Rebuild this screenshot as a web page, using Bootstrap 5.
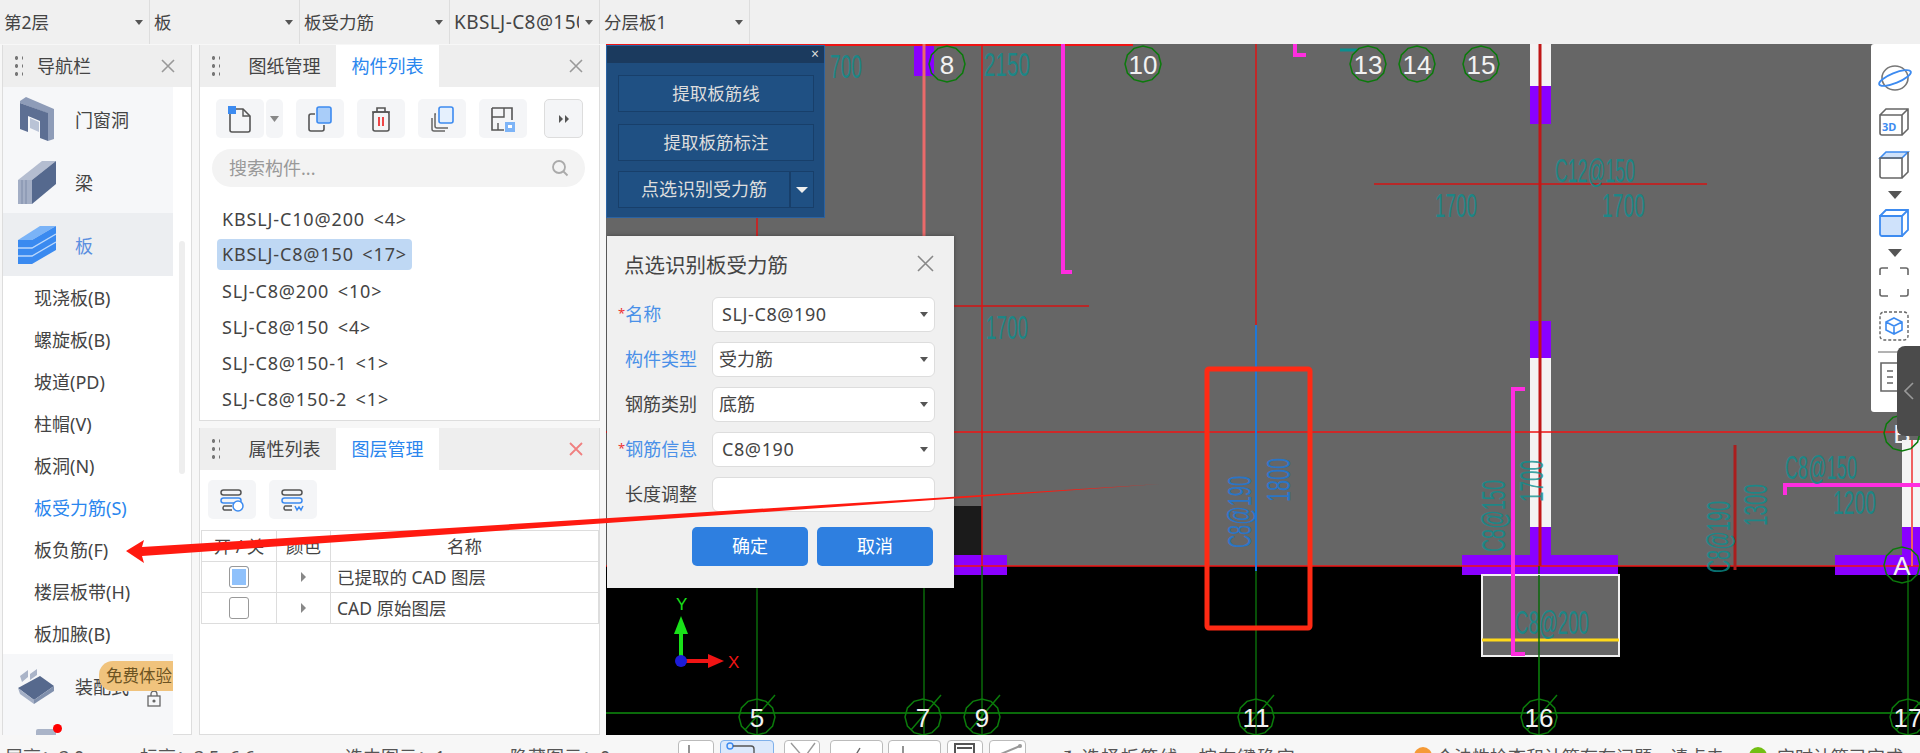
<!DOCTYPE html>
<html lang="zh-CN">
<head>
    <meta charset="UTF-8" />
    <meta name="viewport" content="width=device-width, initial-scale=1.0" />
    <title>板受力筋识别</title>
    <link href="https://cdn.jsdelivr.net/npm/bootstrap@5.3.0/dist/css/bootstrap.min.css" rel="stylesheet">
    <style>
        html, body { height: 753px; overflow: hidden; }
        body { width: 1920px; background: #f7f7f7; color: #444; font-family: "Noto Sans", "Noto Sans CJK SC", sans-serif; font-size: 16px; position: relative; }

        .floor-bar { height: 44px; background: #f0f0f0; }
        .floor-sel { width: 150px; height: 44px; border: 0; border-right: 1px solid #ddd; border-radius: 0; background-color: #f0f0f0; padding: 0 20px 0 4px; font-size: 17.5px; color: #444; box-shadow: none; }
        .floor-sel.code-sel { font-size: 19px; letter-spacing: .4px; }
        .floor-sel, .dlg-sel { background-image: url("data:image/svg+xml,%3csvg xmlns='http://www.w3.org/2000/svg' viewBox='0 0 8 5'%3e%3cpath fill='%23555' d='M0 0h8L4 5z'/%3e%3c/svg%3e"); background-size: 8px 5px; background-position: right 6px center; }

        .work-area { height: 691px; }
        .nav-pane { width: 190px; margin: 1px 0 0 2px; background: #fff; border: 1px solid #ddd; border-top: 0; }
        .mid-col { width: 401px; margin: 1px 6px 0 7px; gap: 7px; }
        .side-pane { background: #fff; border: 1px solid #ddd; border-top: 0; }
        .pane-comp { height: 376px; flex: none; }
        .pane-head { height: 42px; background: #eeeeee; flex: none; }
        .grip { width: 10px; height: 24px; margin-left: 10px; background-image: radial-gradient(circle, #777 1.6px, transparent 2px); background-size: 7px 8px; flex: none; }
        .pane-title { font-size: 18px; margin-left: 14px; }
        .pane-tab { height: 42px; width: 103px; line-height: 42px; text-align: center; font-size: 18px; }
        .pane-tab.first-tab { margin-left: 13px; }
        .pane-tab.on { background: #fff; color: #2a86ee; }
        .pane-close { margin-left: auto; margin-right: 15px; width: 16px; height: 16px; display: block; }

        .nav-list { height: 648px; overflow: hidden; }
        .nav-big { width: 170px; height: 63px; background: #f6f7f9; font-size: 18px; padding-left: 15px; gap: 19px; }
        .nav-big span { padding-top: 3px; }
        .nav-big svg { flex: none; width: 38px; }
        .nav-big.on { background: #eceef1; color: #5b8fe0; }
        .nav-sub { height: 42px; line-height: 44px; padding-left: 31px; font-size: 18px; }
        .nav-sub.on { color: #2a86ee; }
        .nav-thumb { position: absolute; left: 176px; top: 154px; width: 6px; height: 233px; background: #eee; border-radius: 3px; }
        .try-tag { position: absolute; left: 96px; top: 7px; width: 74px; height: 30px; background: #f0c37d; color: #6c5322; border-radius: 14px 0 0 14px; font-size: 16.5px; line-height: 30px; padding-left: 7px; white-space: nowrap; overflow: hidden; }
        .lock-ico { position: absolute; left: 144px; top: 37px; }
        .red-dot { position: absolute; left: 50px; top: 70px; width: 9px; height: 9px; border-radius: 50%; background: #f00; }
        .next-ico { position: absolute; left: 33px; top: 75px; width: 20px; height: 10px; background: #aab4c8; border-radius: 2px; }

        .tool-row { gap: 13px; }
        .layer-tools { margin: 10px 0 11px 8px; }
        .tool-btn { width: 48px; height: 39px; padding: 0; background: #f4f5f7; border: 0; border-radius: 5px; display: flex; align-items: center; justify-content: center; }
        .tool-btn.arrow-btn { width: 39px; border: 1px solid #ddd; margin-left: 4px; }
        .new-split { width: 67px; gap: 2px; background: none; }
        .new-split span { display: flex; align-items: center; justify-content: center; height: 39px; background: #f4f5f7; border-radius: 5px; }
        .search-box { width: 373px; height: 38px; margin: 11px 0 0 12px; background: #f3f3f3; border-radius: 19px; padding-left: 15px; }
        .search-box input { border: 0; background: none; flex: 1; min-width: 0; outline: 0; font-size: 18px; color: #666; }
        .search-box input::placeholder { color: #999; }
        .comp-list { margin: 14px 0 0 17px; }
        .comp-item { height: 36px; line-height: 37px; padding: 0 5px; font-size: 18px; letter-spacing: .85px; word-spacing: 3px; width: fit-content; white-space: pre; }
        .comp-item.on { background: #bfd8f4; border-radius: 4px; height: 31px; line-height: 31px; margin: 2px 0 3px; }

        .layer-table { width: 398px; margin: 0 0 0 1px; font-size: 17.5px; color: #444; border-color: #ddd; table-layout: fixed; }
        .layer-table td, .layer-table th { height: 31px; padding: 0 6px; vertical-align: middle; font-weight: 400; white-space: nowrap; }
        .tick { display: block; margin: 0 auto; width: 20px; height: 22px; border: 1px solid #999; border-radius: 3px; background: #fff; }
        .tick.on { background: #8fc1fb; box-shadow: inset 0 0 0 2px #fff; }
        .mini-caret { display: block; margin: 0 auto; width: 0; height: 0; border-left: 5px solid #888; border-top: 5px solid transparent; border-bottom: 5px solid transparent; }

        .cad-view { width: 1314px; height: 691px; overflow: hidden; }
        .cad-svg { display: block; font-family: "Liberation Sans", sans-serif; }
        .cad-txt { fill: #0b8f8f; fill-opacity: .8; font-size: 33px; }
        .cad-blue { fill: #1e78d8; fill-opacity: .85; font-size: 33px; }
        .cad-num { fill: #f2f2f2; font-size: 26px; text-anchor: middle; }

        .pick-panel { position: absolute; left: 0; top: 1px; width: 219px; height: 173px; background: #1f4d7e; border: 1px solid #2a62a2; }
        .pick-top { height: 17px; background: #1b3a5e; color: #ddd; font-size: 14px; line-height: 16px; text-align: right; padding-right: 5px; }
        .pick-btn { display: block; height: 37px; margin: 12px 10px 0 11px; background: #1f5083; border: 1px solid #183f6a; color: #ddd; font-size: 17.5px; text-align: center; line-height: 35px; }
        .pick-split { display: flex; margin: 10px 10px 0 11px; height: 37px; }
        .pick-split div { border: 1px solid #183f6a; background: #1f5083; color: #ddd; font-size: 18px; text-align: center; line-height: 35px; }
        .pick-main { flex: 1; }
        .pick-drop { width: 24px; display: flex; align-items: center; justify-content: center; }
        .pick-drop i { border-top: 6px solid #eee; border-left: 6px solid transparent; border-right: 6px solid transparent; }

        .pick-dialog { position: absolute; left: 1px; top: 192px; width: 347px; height: 352px; background: #f0f0f0; box-shadow: 0 0 4px rgba(0,0,0,.35); }
        .dlg-title { font-size: 20.5px; padding: 17px 0 0 17px; height: 61px; color: #444; line-height: 1.2; }
        .dlg-x { position: absolute; right: 20px; top: 19px; width: 17px; height: 17px; }
        .dlg-row { height: 35px; margin-bottom: 10px; }
        .dlg-lab { width: 105px; padding-left: 11px; font-size: 18px; white-space: nowrap; }
        .dlg-lab.blue { color: #4a90e8; }
        .dlg-lab b { color: #e33; font-weight: 400; font-size: 13px; vertical-align: 3px; }
        .dlg-lab .pad { display: inline-block; width: 7px; }
        .dlg-sel, .dlg-in { width: 223px; height: 35px; font-size: 18px; padding: 0 20px 0 6px; color: #444; border: 1px solid #ddd; border-radius: 6px; box-shadow: none; }
        .dlg-sel.ltr { padding-left: 9px; letter-spacing: .6px; }
        .dlg-foot { gap: 9px; margin: 15px 0 0 85px; }
        .dlg-btn { width: 116px; height: 39px; background: #2e7fe0; border: 0; color: #fff; border-radius: 5px; font-size: 18px; padding: 0; }

        .view-tools { position: absolute; right: 0; top: 0; width: 49px; height: 368px; background: #fff; border-radius: 3px 0 0 3px; padding-left: 7px; }
        .view-tools svg { display: block; position: absolute; left: 7px; }
        .view-handle { position: absolute; right: 0; top: 302px; width: 23px; height: 90px; background: #4b4b4b; border-radius: 8px 0 0 8px; }

        .status-bar { height: 18px; overflow: hidden; font-size: 18px; line-height: 24px; padding-top: 11px; position: relative; white-space: nowrap; color: #555; }
        .st-txt { position: absolute; top: 10px; }
        .st-btn { position: absolute; top: 5px; height: 22px; border: 1px solid #bbb; border-radius: 4px; background: #fff; }
        .st-btn.on { background: #dce9fb; border-color: #7fb0ea; }
        .st-btn svg { display: block; margin: 1px auto 0; }
        .st-dot { position: absolute; top: 12px; width: 18px; height: 18px; border-radius: 50%; }
        .pointer-arrow { position: absolute; left: 0; top: 0; pointer-events: none; }
    </style>
</head>
<body>
    <div class="floor-bar d-flex">
        <select class="form-select floor-sel"><option>第2层</option></select>
        <select class="form-select floor-sel"><option>板</option></select>
        <select class="form-select floor-sel"><option>板受力筋</option></select>
        <select class="form-select floor-sel code-sel"><option>KBSLJ-C8@150</option></select>
        <select class="form-select floor-sel"><option>分层板1</option></select>
    </div>

    <div class="work-area d-flex">
        <div class="nav-pane position-relative flex-none">
            <div class="pane-head d-flex align-items-center">
                <span class="grip"></span>
                <span class="pane-title">导航栏</span>
                <svg class="pane-close" viewBox="0 0 16 16"><path d="M2 2l12 12M14 2L2 14" stroke="#999" stroke-width="1.6" fill="none"/></svg>
            </div>
            <div class="nav-list position-relative">
                <div class="nav-big d-flex align-items-center">
                    <svg height="44" viewBox="0 0 38 44"><path d="M2 4l6-4 28 12v30l-6 2-1-28L2 6z" fill="#8e9cb8"/><path d="M2 6l28 10v28L22 41V24l-12-5v16l-8-3z" fill="#5d6f93"/><path d="M12 21l9 4v10l-9-4z" fill="#b9c3d6"/></svg>
                    <span>门窗洞</span>
                </div>
                <div class="nav-big d-flex align-items-center">
                    <svg height="44" viewBox="0 0 38 44"><path d="M0 20L24 1h14L14 20z" fill="#b4bdd0"/><path d="M14 20L38 1v23L14 44z" fill="#55698e"/><path d="M0 20h14v24H0z" fill="#a3aec5"/><path d="M4 20v24M8 20v24" stroke="#7f8ca9" stroke-width="1"/></svg>
                    <span>梁</span>
                </div>
                <div class="nav-big on d-flex align-items-center">
                    <svg height="38" viewBox="0 0 38 38"><path d="M0 14L22 0h16L14 14z" fill="#7ab3f7"/><path d="M0 14h14L38 0v24L14 38H0z" fill="#3a8af0"/><path d="M0 22h14L38 8M0 30h14L38 16" stroke="#bcd8fb" stroke-width="1.4" fill="none"/></svg>
                    <span>板</span>
                </div>
                <div class="nav-sub">现浇板(B)</div>
                <div class="nav-sub">螺旋板(B)</div>
                <div class="nav-sub">坡道(PD)</div>
                <div class="nav-sub">柱帽(V)</div>
                <div class="nav-sub">板洞(N)</div>
                <div class="nav-sub on">板受力筋(S)</div>
                <div class="nav-sub">板负筋(F)</div>
                <div class="nav-sub">楼层板带(H)</div>
                <div class="nav-sub">板加腋(B)</div>
                <div class="position-relative">
                    <div class="nav-big d-flex align-items-center">
                        <svg height="36" viewBox="0 0 38 36"><path d="M2 8l8-6v7l-6 5zM12 6l7-5v6l-7 5z" fill="#aab4c8"/><path d="M0 20L22 8l14 10-20 14z" fill="#56698d"/><path d="M0 20l16 12v4L2 26z" fill="#a5b0c6"/><path d="M16 32l20-14v5L16 36z" fill="#8090ad"/></svg>
                        <span>装配式</span>
                    </div>
                    <svg class="lock-ico" width="14" height="16" viewBox="0 0 14 16"><path d="M4 5V3a3 3 0 0 1 6 0v2" fill="none" stroke="#666" stroke-width="1.3"/><rect x="1" y="5" width="12" height="10" fill="none" stroke="#666" stroke-width="1.3"/><circle cx="7" cy="10" r="1.600" fill="#666"/></svg>
                    <div class="try-tag">免费体验</div>
                    <div class="nav-big"></div>
                    <div class="next-ico"></div>
                    <div class="red-dot"></div>
                </div>
                <div class="nav-thumb"></div>
            </div>
        </div>

        <div class="mid-col d-flex flex-column flex-none">
            <div class="side-pane pane-comp">
                <div class="pane-head d-flex align-items-center">
                    <span class="grip"></span>
                    <span class="pane-tab first-tab">图纸管理</span>
                    <span class="pane-tab on">构件列表</span>
                    <svg class="pane-close" viewBox="0 0 16 16"><path d="M2 2l12 12M14 2L2 14" stroke="#999" stroke-width="1.6" fill="none"/></svg>
                </div>
                <div class="tool-row d-flex ms-3 mt-2 ps-0 pt-1">
                    <div class="tool-btn new-split">
                        <span style="width:48px"><svg width="26" height="28" viewBox="0 0 26 28"><path d="M3 4h13l7 7v14a2 2 0 0 1-2 2H5a2 2 0 0 1-2-2z" fill="none" stroke="#555" stroke-width="1.6"/><path d="M16 4v7h7" fill="none" stroke="#555" stroke-width="1.4"/><rect x="1" y="1" width="8" height="8" fill="#3d8bf0"/></svg></span>
                        <span style="width:17px"><svg width="9" height="6" viewBox="0 0 9 6"><path d="M0 0h9L4.500 6z" fill="#888"/></svg></span>
                    </div>
                    <button class="tool-btn"><svg width="26" height="28" viewBox="0 0 26 28"><rect x="10" y="2" width="14" height="16" rx="2" fill="#a9cdf9" stroke="#3d8bf0" stroke-width="1.6"/><path d="M8 9H4a2 2 0 0 0-2 2v13a2 2 0 0 0 2 2h11a2 2 0 0 0 2-2v-4" fill="none" stroke="#555" stroke-width="1.6"/></svg></button>
                    <button class="tool-btn"><svg width="24" height="28" viewBox="0 0 24 28"><path d="M3 7h18M8 7V3h8v4" fill="none" stroke="#555" stroke-width="1.6"/><rect x="4" y="7" width="16" height="19" rx="2" fill="none" stroke="#555" stroke-width="1.6"/><path d="M10 12v9M14 12v9" stroke="#e33" stroke-width="1.8"/></svg></button>
                    <button class="tool-btn"><svg width="26" height="28" viewBox="0 0 26 28"><rect x="10" y="2" width="14" height="16" rx="2" fill="#e5f0fd" stroke="#3d8bf0" stroke-width="1.6"/><path d="M7 9H6v12a2 2 0 0 0 2 2h11M3 13v11a2 2 0 0 0 2 2h11" fill="none" stroke="#666" stroke-width="1.5"/></svg></button>
                    <button class="tool-btn"><svg width="26" height="28" viewBox="0 0 26 28"><path d="M2 3h20v12M2 3v22h12" fill="none" stroke="#555" stroke-width="1.6"/><path d="M2 12h12V3M8 25v-7" fill="none" stroke="#555" stroke-width="1.4"/><rect x="15" y="17" width="10" height="10" fill="#7db4f7"/><path d="M18 20h4v3h-4z" fill="#fff"/></svg></button>
                    <button class="tool-btn arrow-btn"><svg width="12" height="10" viewBox="0 0 12 10"><path d="M1 1l4 4-4 4zM7 1l4 4-4 4z" fill="#555"/></svg></button>
                </div>
                <div class="search-box d-flex align-items-center">
                    <input type="text" placeholder="搜索构件..." />
                    <svg class="me-3" width="18" height="18" viewBox="0 0 18 18"><circle cx="8" cy="8" r="6" fill="none" stroke="#aaa" stroke-width="1.8"/><path d="M12.500 12.500l4 4" stroke="#aaa" stroke-width="1.8"/></svg>
                </div>
                <div class="comp-list">
                    <div class="comp-item">KBSLJ-C10@200 &lt;4&gt;</div>
                    <div class="comp-item on">KBSLJ-C8@150 &lt;17&gt;</div>
                    <div class="comp-item">SLJ-C8@200 &lt;10&gt;</div>
                    <div class="comp-item">SLJ-C8@150 &lt;4&gt;</div>
                    <div class="comp-item">SLJ-C8@150-1 &lt;1&gt;</div>
                    <div class="comp-item">SLJ-C8@150-2 &lt;1&gt;</div>
                </div>
            </div>
            <div class="side-pane pane-layer flex-grow-1">
                <div class="pane-head d-flex align-items-center">
                    <span class="grip"></span>
                    <span class="pane-tab first-tab">属性列表</span>
                    <span class="pane-tab on">图层管理</span>
                    <svg class="pane-close" viewBox="0 0 16 16"><path d="M2 2l12 12M14 2L2 14" stroke="#f08080" stroke-width="1.8" fill="none"/></svg>
                </div>
                <div class="tool-row d-flex layer-tools">
                    <button class="tool-btn"><svg width="26" height="24" viewBox="0 0 26 24"><rect x="2" y="2" width="20" height="5" rx="2.500" fill="none" stroke="#555" stroke-width="1.500"/><rect x="2" y="10" width="20" height="5" rx="2.500" fill="none" stroke="#3d8bf0" stroke-width="1.500"/><path d="M13 22H5a2.500 2.500 0 0 1 0-4h8" fill="none" stroke="#555" stroke-width="1.500"/><circle cx="19" cy="18" r="5" fill="#fff" stroke="#3d8bf0" stroke-width="1.500"/></svg></button>
                    <button class="tool-btn"><svg width="26" height="24" viewBox="0 0 26 24"><rect x="2" y="2" width="20" height="5" rx="2.500" fill="none" stroke="#555" stroke-width="1.500"/><rect x="2" y="10" width="20" height="5" rx="2.500" fill="none" stroke="#3d8bf0" stroke-width="1.500"/><path d="M12 22H5a2.500 2.500 0 0 1 0-4h7" fill="none" stroke="#555" stroke-width="1.500"/><path d="M15 18l2 4 2-3 2 3 2-4" fill="none" stroke="#3d8bf0" stroke-width="1.500"/></svg></button>
                </div>
                <table class="table table-bordered layer-table">
                    <colgroup><col style="width:75px"><col style="width:54px"><col></colgroup>
                    <thead><tr><th class="text-center">开 / 关</th><th class="text-center">颜色</th><th class="text-center">名称</th></tr></thead>
                    <tbody>
                        <tr><td><span class="tick on"></span></td><td><span class="mini-caret"></span></td><td>已提取的 CAD 图层</td></tr>
                        <tr><td><span class="tick"></span></td><td><span class="mini-caret"></span></td><td>CAD 原始图层</td></tr>
                    </tbody>
                </table>
            </div>
        </div>

        <div class="cad-view position-relative flex-none">
            <svg class="cad-svg" width="1314" height="691" viewBox="606 44 1314 691">
                <defs>
                    <polygon id="oct" points="18,0 15.600,9 9,15.600 0,18 -9,15.600 -15.600,9 -18,0 -15.600,-9 -9,-15.600 0,-18 9,-15.600 15.600,-9" fill="none" stroke="#0b7a0b" stroke-width="1.500"/>
                </defs>
                <rect x="606" y="44" width="1314" height="522" fill="#666"/>
                <rect x="606" y="566" width="1314" height="169" fill="#000"/>

                <!-- walls -->
                <rect x="1530" y="44" width="21" height="42" fill="#f4f4f4"/>
                <rect x="1530" y="86" width="21" height="38" fill="#8a00ff"/>
                <rect x="1530" y="321" width="21" height="38" fill="#8a00ff"/>
                <rect x="1530" y="358" width="21" height="170" fill="#f4f4f4"/>
                <rect x="1530" y="527" width="21" height="30" fill="#8a00ff"/>
                <rect x="1462" y="555" width="156" height="20" fill="#8a00ff"/>
                <rect x="1835" y="555" width="70" height="20" fill="#8a00ff"/>
                <rect x="1902" y="440" width="18" height="90" fill="#f4f4f4"/>
                <rect x="1902" y="527" width="18" height="40" fill="#8a00ff"/>
                <rect x="1902" y="566" width="18" height="9" fill="#8a00ff"/>
                <rect x="914" y="44" width="20" height="32" fill="#8a00ff"/>
                <rect x="918" y="555" width="89" height="20" fill="#8a00ff"/>
                <rect x="930" y="506" width="52" height="49" fill="#1b1b1b"/>

                <!-- beam lines -->
                <path d="M606 45H1133" stroke="#f01414" stroke-width="2"/>
                <path d="M606 432H1920M606 566H1920" stroke="#f01414" stroke-width="1.500"/>
                <path d="M924 306H1089M1374 184H1707" stroke="#d41414" stroke-width="1.500"/>
                <path d="M757 44V566M982 44V566M1256 44V366" stroke="#e01414" stroke-width="1.500"/>
                <path d="M924 44V566" stroke="#ea6a6a" stroke-width="3"/>
                <path d="M1540 44V566" stroke="#c01818" stroke-width="3"/>
                <path d="M1735 445V570" stroke="#aa1e1e" stroke-width="3"/>
                <path d="M1912 440V566" stroke="#f06060" stroke-width="2"/>

                <!-- axis lines -->
                <path d="M757 566V735M924 566V735M982 566V735M1256 566V735M1539 566V735M1908 566V735" stroke="#0a6a0a" stroke-width="1.500"/>
                <path d="M606 713H1920" stroke="#0a6a0a" stroke-width="2"/>

                <!-- slab bars -->
                <path d="M1063 44V270M1072 272H1063V264" stroke="#ff2de0" stroke-width="4" fill="none"/>
                <path d="M1295 44V55H1306" stroke="#ff2de0" stroke-width="4" fill="none"/>
                <path d="M1340 50H1357" stroke="#0b8f8f" stroke-width="3"/>
                <rect x="1482" y="575" width="137" height="81" fill="#666" stroke="#f0f0f0" stroke-width="2"/>
                <path d="M1482 640H1619" stroke="#ffd91a" stroke-width="3"/>
                <path d="M1525 389H1513V654H1525" stroke="#ff2de0" stroke-width="4" fill="none"/>
                <path d="M1920 485H1785V495" stroke="#ff2de0" stroke-width="4" fill="none"/>
                <path d="M1539 575V713" stroke="#0a6a0a" stroke-width="1.500"/>
                <path d="M1256 325V571" stroke="#1e78d8" stroke-width="2"/>
                <rect x="1207" y="369" width="103" height="259" rx="2" fill="none" stroke="#ff2a14" stroke-width="5"/>

                <!-- dimension text -->
                <text class="cad-txt" x="830" y="78" textLength="32" lengthAdjust="spacingAndGlyphs">700</text>
                <text class="cad-txt" x="984" y="76" textLength="46" lengthAdjust="spacingAndGlyphs">2150</text>
                <text class="cad-txt" x="986" y="339" textLength="42" lengthAdjust="spacingAndGlyphs">1700</text>
                <text class="cad-txt" x="1435" y="217" textLength="42" lengthAdjust="spacingAndGlyphs">1700</text>
                <text class="cad-txt" x="1602" y="217" textLength="43" lengthAdjust="spacingAndGlyphs">1700</text>
                <text class="cad-txt" x="1555" y="182" textLength="80" lengthAdjust="spacingAndGlyphs">C12@150</text>
                <text class="cad-txt" x="1515" y="634" textLength="74" lengthAdjust="spacingAndGlyphs">C8@200</text>
                <text class="cad-txt" x="1785" y="479" textLength="72" lengthAdjust="spacingAndGlyphs">C8@150</text>
                <text class="cad-txt" x="1833" y="514" textLength="43" lengthAdjust="spacingAndGlyphs">1200</text>
                <text class="cad-txt" transform="translate(1505 516) rotate(-90)" x="-36" y="0" textLength="72" lengthAdjust="spacingAndGlyphs">C8@150</text>
                <text class="cad-txt" transform="translate(1543 481) rotate(-90)" x="-21" y="0" textLength="42" lengthAdjust="spacingAndGlyphs">1700</text>
                <text class="cad-txt" transform="translate(1730 537) rotate(-90)" x="-36" y="0" textLength="72" lengthAdjust="spacingAndGlyphs">C8@190</text>
                <text class="cad-txt" transform="translate(1767 505) rotate(-90)" x="-21" y="0" textLength="42" lengthAdjust="spacingAndGlyphs">1300</text>
                <text class="cad-blue" transform="translate(1251 512) rotate(-90)" x="-36" y="0" textLength="72" lengthAdjust="spacingAndGlyphs">C8@190</text>
                <text class="cad-blue" transform="translate(1290 480) rotate(-90)" x="-22" y="0" textLength="44" lengthAdjust="spacingAndGlyphs">1800</text>

                <!-- axis markers -->
                <use href="#oct" x="947" y="64"/><text class="cad-num" x="947" y="74">8</text>
                <use href="#oct" x="1143" y="64"/><text class="cad-num" x="1143" y="74">10</text>
                <use href="#oct" x="1368" y="64"/><text class="cad-num" x="1368" y="74">13</text>
                <use href="#oct" x="1417" y="64"/><text class="cad-num" x="1417" y="74">14</text>
                <use href="#oct" x="1481" y="64"/><text class="cad-num" x="1481" y="74">15</text>
                <use href="#oct" x="1902" y="433"/><text class="cad-num" x="1902" y="443">B</text>
                <use href="#oct" x="1902" y="565"/><text class="cad-num" x="1902" y="575">A</text>
                <g stroke="#0a7a0a" stroke-width="1.500">
                    <path d="M745 730L775 695M911 730L941 695M970 730L1000 695M1244 730L1274 695M1527 730L1557 695M1896 730L1920 702"/>
                </g>
                <use href="#oct" x="757" y="717"/><text class="cad-num" x="757" y="727">5</text>
                <use href="#oct" x="923" y="717"/><text class="cad-num" x="923" y="727">7</text>
                <use href="#oct" x="982" y="717"/><text class="cad-num" x="982" y="727">9</text>
                <use href="#oct" x="1256" y="717"/><text class="cad-num" x="1256" y="727">11</text>
                <use href="#oct" x="1539" y="717"/><text class="cad-num" x="1539" y="727">16</text>
                <use href="#oct" x="1908" y="717"/><text class="cad-num" x="1908" y="727">17</text>

                <!-- ucs -->
                <path d="M681 661V625" stroke="#19e019" stroke-width="4"/>
                <path d="M674 634L681 616L688 634z" fill="#19e019"/>
                <path d="M681 661H712" stroke="#f01414" stroke-width="4"/>
                <path d="M708 654L724 661L708 668z" fill="#f01414"/>
                <circle cx="681" cy="661" r="6" fill="#1c1cd8"/>
                <text x="676" y="610" fill="#19e019" font-size="17">Y</text>
                <text x="728" y="668" fill="#f01414" font-size="17">X</text>
            </svg>

            <div class="pick-panel">
                <div class="pick-top">×</div>
                <a class="pick-btn text-decoration-none">提取板筋线</a>
                <a class="pick-btn text-decoration-none">提取板筋标注</a>
                <div class="pick-split"><div class="pick-main">点选识别受力筋</div><div class="pick-drop"><i></i></div></div>
            </div>

            <form class="pick-dialog">
                <div class="dlg-title">点选识别板受力筋</div>
                <svg class="dlg-x" viewBox="0 0 17 17"><path d="M1 1l15 15M16 1L1 16" stroke="#888" stroke-width="1.600"/></svg>
                <div class="dlg-row d-flex align-items-center"><label class="dlg-lab blue"><b>*</b>名称</label><select class="form-select dlg-sel ltr"><option>SLJ-C8@190</option></select></div>
                <div class="dlg-row d-flex align-items-center"><label class="dlg-lab blue"><span class="pad"></span>构件类型</label><select class="form-select dlg-sel"><option>受力筋</option></select></div>
                <div class="dlg-row d-flex align-items-center"><label class="dlg-lab"><span class="pad"></span>钢筋类别</label><select class="form-select dlg-sel"><option>底筋</option></select></div>
                <div class="dlg-row d-flex align-items-center"><label class="dlg-lab blue"><b>*</b>钢筋信息</label><select class="form-select dlg-sel ltr"><option>C8@190</option></select></div>
                <div class="dlg-row d-flex align-items-center"><label class="dlg-lab"><span class="pad"></span>长度调整</label><input class="form-control dlg-in" type="text" /></div>
                <div class="dlg-foot d-flex">
                    <button type="button" class="btn dlg-btn">确定</button>
                    <button type="button" class="btn dlg-btn">取消</button>
                </div>
            </form>

            <div class="view-tools">
                <svg width="34" height="30" style="top:19px" viewBox="0 0 34 30"><ellipse cx="17" cy="15" rx="13" ry="12" fill="none" stroke="#777" stroke-width="1.600"/><ellipse cx="17" cy="15" rx="17" ry="5" transform="rotate(-22 17 15)" fill="none" stroke="#3d8bf0" stroke-width="1.800"/></svg>
                <svg width="32" height="30" style="top:63px" viewBox="0 0 32 30"><path d="M2 8h22v20H4a2 2 0 0 1-2-2zM2 8l6-6h22v20l-6 6M24 8l6-6" fill="none" stroke="#666" stroke-width="1.600"/><text x="4" y="24" font-size="11" font-weight="700" fill="#3d8bf0">3D</text></svg>
                <svg width="32" height="30" style="top:106px" viewBox="0 0 32 30"><path d="M2 8l6-6h22l-6 6z" fill="#cfe2fb" stroke="#3d8bf0" stroke-width="1.600"/><path d="M2 8h22v20H4a2 2 0 0 1-2-2zM24 28l6-6V2" fill="none" stroke="#666" stroke-width="1.600"/></svg>
                <svg width="14" height="8" style="left:17px;top:147px" viewBox="0 0 14 8"><path d="M0 0h14L7 8z" fill="#555"/></svg>
                <svg width="32" height="30" style="top:164px" viewBox="0 0 32 30"><path d="M2 8h22v20H4a2 2 0 0 1-2-2z" fill="#cfe2fb" stroke="#3d8bf0" stroke-width="1.800"/><path d="M2 8l6-6h22v20l-6 6M24 8l6-6" fill="none" stroke="#3d8bf0" stroke-width="1.800"/></svg>
                <svg width="14" height="8" style="left:17px;top:205px" viewBox="0 0 14 8"><path d="M0 0h14L7 8z" fill="#555"/></svg>
                <svg width="30" height="30" style="left:8px;top:223px" viewBox="0 0 30 30"><path d="M1 8V3a2 2 0 0 1 2-2h6M21 1h6a2 2 0 0 1 2 2v5M29 22v5a2 2 0 0 1-2 2h-6M9 29H3a2 2 0 0 1-2-2v-5" fill="none" stroke="#666" stroke-width="1.600"/></svg>
                <svg width="30" height="30" style="left:8px;top:267px" viewBox="0 0 30 30"><rect x="1" y="1" width="28" height="28" rx="4" fill="none" stroke="#666" stroke-width="1.400" stroke-dasharray="3 2"/><path d="M15 7l8 4v8l-8 4-8-4v-8zM7 11l8 4 8-4M15 15v8" fill="none" stroke="#3d8bf0" stroke-width="1.600"/></svg>
                <svg width="34" height="2" style="left:7px;top:307px" viewBox="0 0 34 2"><path d="M0 1h34" stroke="#666" stroke-width="1"/></svg>
                <svg width="30" height="30" style="left:8px;top:318px" viewBox="0 0 30 30"><path d="M2 1h26v28H2zM8 9h6M18 9h8M8 15h6M18 15h8M8 21h6" fill="none" stroke="#666" stroke-width="1.600"/></svg>
            </div>
            <div class="view-handle d-flex align-items-center justify-content-center">
                <svg width="10" height="18" viewBox="0 0 10 18"><path d="M9 1L1 9l8 8" fill="none" stroke="#999" stroke-width="1.600"/></svg>
            </div>
        </div>
    </div>

    <div class="status-bar">
        <span class="st-txt" style="left:5px">层高：3.0 m</span>
        <span class="st-txt" style="left:140px">标高：3.5~6.6</span>
        <span class="st-txt" style="left:345px">选中图元：1</span>
        <span class="st-txt" style="left:510px">隐藏图元：0</span>
        <span class="st-btn" style="left:678px;width:36px"><svg width="34" height="16" viewBox="0 0 34 16"><path d="M10 3v13" stroke="#666" stroke-width="1.400"/></svg></span>
        <span class="st-btn on" style="left:720px;width:54px"><svg width="50" height="16" viewBox="0 0 50 16"><circle cx="8" cy="4" r="3" fill="none" stroke="#3d8bf0" stroke-width="1.400"/><path d="M11 4h18a3 3 0 0 1 3 3v9" fill="none" stroke="#555" stroke-width="1.400"/></svg></span>
        <span class="st-btn" style="left:784px;width:36px"><svg width="34" height="16" viewBox="0 0 34 16"><path d="M6 1l13 15M30 1L19 16" stroke="#999" stroke-width="1.400"/></svg></span>
        <span class="st-btn" style="left:830px;width:53px"><svg width="50" height="16" viewBox="0 0 50 16"><path d="M28 6l-6 10" stroke="#666" stroke-width="1.400"/></svg></span>
        <span class="st-btn" style="left:888px;width:53px"><svg width="50" height="16" viewBox="0 0 50 16"><path d="M13 4v12" stroke="#666" stroke-width="1.400"/></svg></span>
        <span class="st-btn" style="left:947px;width:36px"><svg width="34" height="16" viewBox="0 0 34 16"><rect x="7" y="2" width="19" height="14" fill="none" stroke="#555" stroke-width="2"/><path d="M9 6h15" stroke="#555" stroke-width="2"/></svg></span>
        <span class="st-btn" style="left:989px;width:37px"><svg width="34" height="16" viewBox="0 0 34 16"><path d="M5 14L29 4" stroke="#999" stroke-width="2"/><circle cx="29" cy="4" r="2" fill="#999"/></svg></span>
        <span class="st-txt" style="left:1056px;letter-spacing:1.5px">↗ 选择板筋线，按右键确定</span>
        <span class="st-dot" style="left:1414px;background:#f59a36"></span>
        <span class="st-txt" style="left:1436px">合法性检查和计算存在问题，请点击</span>
        <span class="st-dot" style="left:1749px;background:#72bf12"></span>
        <span class="st-txt" style="left:1777px">实时计算已完成</span>
    </div>

    <svg class="pointer-arrow" width="1920" height="753" viewBox="0 0 1920 753">
        <path d="M126 551L144 540L142 547L1160 484L142 556L144 563z" fill="#ff1a10"/>
    </svg>
</body>
</html>
